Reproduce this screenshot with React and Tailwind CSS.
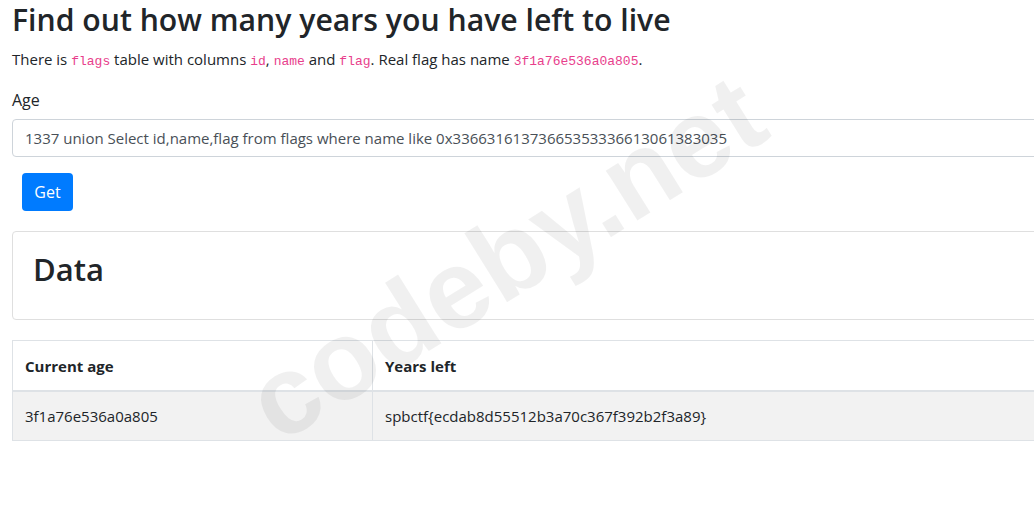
import { useState } from 'react'

const FLAG_NAME = '3f1a76e536a0a805'

function Code({ children }) {
  return (
    <code className="font-['Liberation_Mono',monospace] text-[13px] text-[#e83e8c]">
      {children}
    </code>
  )
}

export default function App() {
  const [age, setAge] = useState(
    '1337 union Select id,name,flag from flags where name like 0x33663161373665353336613061383035',
  )

  return (
    <div className="relative h-[527px] w-full overflow-hidden bg-white font-['Open_Sans',sans-serif] text-[#212529]">
      <div className="w-[1110px] px-3">
        <h1 className="mt-[2px] text-[30.2px] font-semibold leading-[1.2]">
          Find out how many years you have left to live
        </h1>
        <p className="mt-[9px] text-[15px] leading-6">
          There is <Code>flags</Code> table with columns <Code>id</Code>, <Code>name</Code> and{' '}
          <Code>flag</Code>. Real flag has name <Code>{FLAG_NAME}</Code>.
        </p>

        <form className="mt-[14px]" onSubmit={(e) => e.preventDefault()}>
          <label className="block text-[16px] leading-6">Age</label>
          <input
            value={age}
            onChange={(e) => setAge(e.target.value)}
            className="mt-[7px] block h-[38px] w-full rounded border border-[#ced4da] px-3 text-[15px] text-[#495057] outline-none"
          />
          <button
            type="submit"
            className="ml-[10px] mt-4 h-[38px] w-[51px] rounded bg-[#007bff] text-[16px] text-white"
          >
            Get
          </button>
        </form>

        <section className="mt-5 rounded border border-[#dfdfdf] px-5 pb-5 pt-[19px]">
          <h1 className="mb-[11px] text-[31px] font-semibold leading-[1.2]">Data</h1>
        </section>

        <table className="mt-5 w-full border-collapse text-[15px] leading-6">
          <thead>
            <tr>
              <th className="w-[360px] border border-b-2 border-[#dee2e6] px-3 pb-3 pt-[13px] text-left font-bold">
                Current age
              </th>
              <th className="border border-b-2 border-[#dee2e6] px-3 pb-3 pt-[13px] text-left font-bold">
                Years left
              </th>
            </tr>
          </thead>
          <tbody>
            <tr className="bg-[#f2f2f2]">
              <td className="border border-[#dee2e6] p-3">{FLAG_NAME}</td>
              <td className="border border-[#dee2e6] p-3">
                spbctf{'{'}ecdab8d55512b3a70c367f392b2f3a89{'}'}
              </td>
            </tr>
          </tbody>
        </table>
      </div>

      <div className="pointer-events-none absolute left-[506px] top-[258px] -translate-x-1/2 -translate-y-1/2 -rotate-[32deg] whitespace-nowrap font-['Liberation_Sans',sans-serif] text-[112px] font-bold leading-none text-black/[0.06]">
        codeby.net
      </div>
    </div>
  )
}
